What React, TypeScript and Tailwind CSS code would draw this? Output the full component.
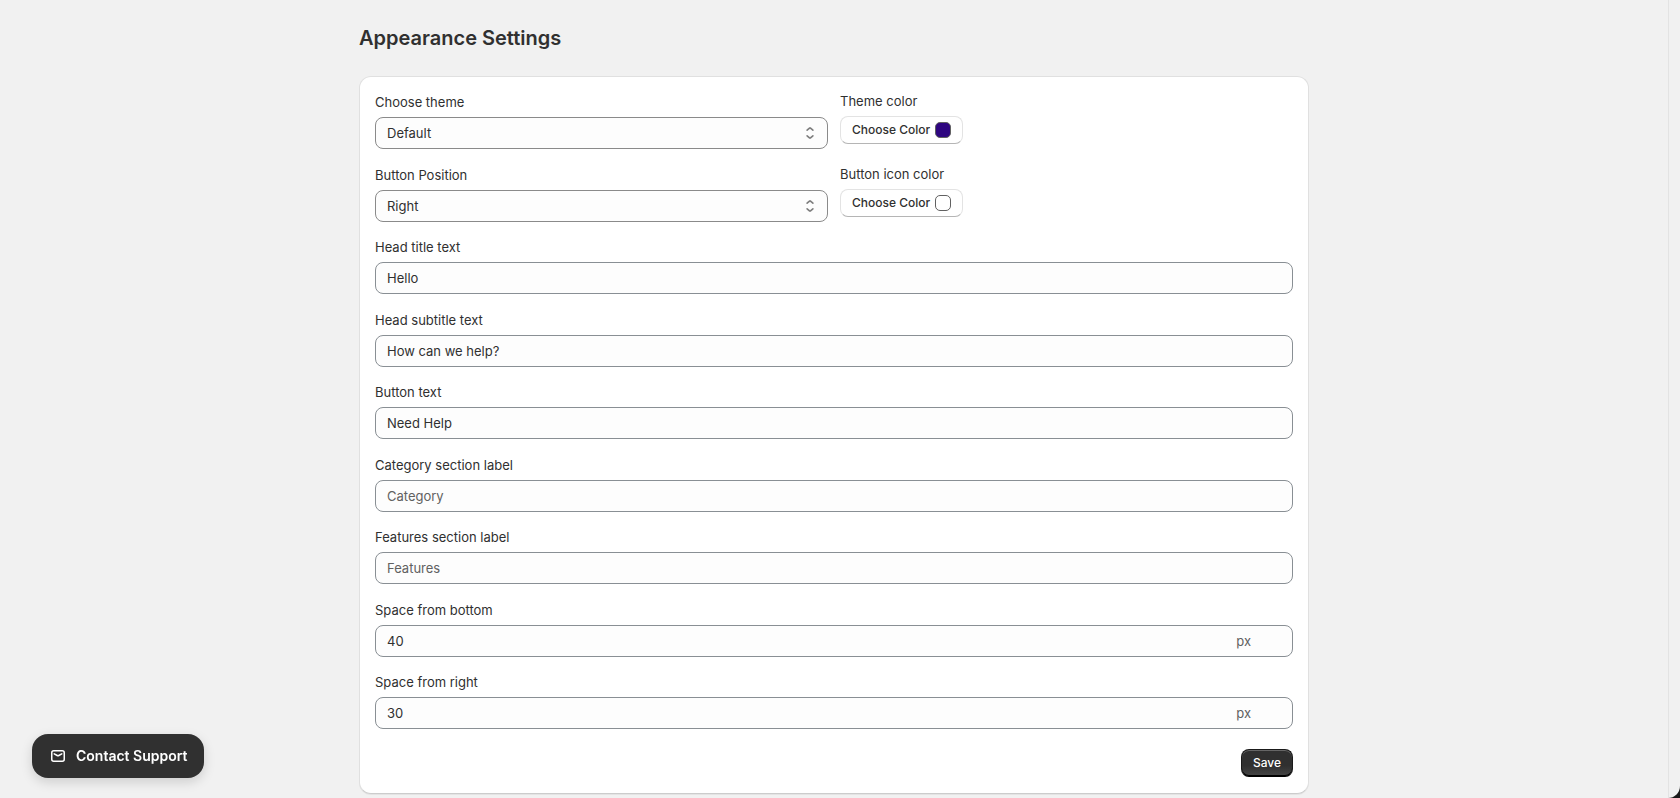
import { useId, useState } from "react";
import type { ReactNode } from "react";

const controlClass =
  "h-8 w-full rounded-lg border bg-[#fdfdfd] px-[11px] text-[13px] leading-5 text-[#303030] placeholder:text-[#616161]";

function Field({ id, label, children }: { id: string; label: string; children: ReactNode }) {
  return (
    <div className="flex flex-col gap-1">
      <label htmlFor={id} className="text-[13px] leading-[21px]">
        {label}
      </label>
      {children}
    </div>
  );
}

function TextField({
  label,
  value,
  placeholder,
  suffix,
}: {
  label: string;
  value?: string;
  placeholder?: string;
  suffix?: string;
}) {
  const id = useId();
  return (
    <Field id={id} label={label}>
      <div className="relative">
        <input
          id={id}
          className={`${controlClass} border-[#898f94]`}
          defaultValue={value}
          placeholder={placeholder}
        />
        {suffix && (
          <span className="pointer-events-none absolute inset-y-0 right-[42px] flex items-center text-[13px] leading-5 text-[#616161]">
            {suffix}
          </span>
        )}
      </div>
    </Field>
  );
}

function SelectField({ label, options }: { label: string; options: string[] }) {
  const id = useId();
  return (
    <Field id={id} label={label}>
      <div className="relative">
        <select id={id} className={`${controlClass} appearance-none border-[#8a8a8a]`}>
          {options.map((option) => (
            <option key={option}>{option}</option>
          ))}
        </select>
        <svg
          viewBox="0 0 20 20"
          className="pointer-events-none absolute top-1.5 right-2 size-5"
          fill="none"
          stroke="#7e7e7e"
          strokeWidth="1.6"
          strokeLinecap="round"
          strokeLinejoin="round"
        >
          <path d="M7.1 7.2 9.5 5.1a.8.8 0 0 1 1 0L12.9 7.2" />
          <path d="M7.1 12.8l2.4 2.1a.8.8 0 0 0 1 0L12.9 12.8" />
        </svg>
      </div>
    </Field>
  );
}

function ColorField({ label, swatch }: { label: string; swatch: string }) {
  const id = useId();
  return (
    <div className="flex flex-col items-start gap-[5px]">
      <label htmlFor={id} className="text-[13px] leading-[19px]">
        {label}
      </label>
      <button
        id={id}
        type="button"
        className="flex h-7 items-center gap-[5px] rounded-lg border border-[#e3e3e3] border-b-[#b5b5b5] bg-white px-[11px] text-xs leading-4 font-[550]"
      >
        Choose Color
        <span className={`size-4 rounded-[5px] border border-[#616161] ${swatch}`} />
      </button>
    </div>
  );
}

function ContactSupport() {
  const [open, setOpen] = useState(false);
  return (
    <button
      type="button"
      aria-expanded={open}
      onClick={() => setOpen(!open)}
      className="fixed bottom-5 left-8 flex h-11 items-center gap-2 rounded-2xl bg-[#303030] px-4 text-sm font-semibold text-white shadow-[0_4px_12px_rgba(0,0,0,0.15)]"
    >
      <svg
        viewBox="0 0 20 20"
        className="size-5"
        fill="none"
        stroke="currentColor"
        strokeWidth="1.5"
        strokeLinecap="round"
      >
        <rect x="3.75" y="4.75" width="12.5" height="10.5" rx="2" />
        <path d="M6.2 7.8 9.2 9.5a1.6 1.6 0 0 0 1.6 0L13.8 7.8" />
      </svg>
      Contact Support
    </button>
  );
}

export default function App() {
  return (
    <div className="flex min-h-screen bg-[#1a1a1a] font-['Inter',sans-serif] text-[#303030]">
      <div className="flex flex-1 rounded-br-xl bg-[#f1f1f1]">
        <main className="mx-auto flex w-full max-w-[998px] flex-col px-6 pb-1">
          <h1 className="pt-6 pb-6 text-xl leading-7 font-semibold">Appearance Settings</h1>
          <form
            className="flex flex-1 flex-col gap-5 rounded-xl border border-[#e0e0e0] border-b-[#cccccc] bg-white p-[15px] pb-4 shadow-[0_1px_0_rgba(0,0,0,0.05)]"
            onSubmit={(event) => event.preventDefault()}
          >
            <div className="flex flex-1 flex-col justify-between gap-3">
              <div className="grid grid-cols-2 gap-3">
                <SelectField label="Choose theme" options={["Default"]} />
                <ColorField label="Theme color" swatch="bg-[#2e0680]" />
              </div>
              <div className="grid grid-cols-2 gap-3">
                <SelectField label="Button Position" options={["Right", "Left"]} />
                <ColorField label="Button icon color" swatch="bg-white" />
              </div>
              <TextField label="Head title text" value="Hello" />
              <TextField label="Head subtitle text" value="How can we help?" />
              <TextField label="Button text" value="Need Help" />
              <TextField label="Category section label" placeholder="Category" />
              <TextField label="Features section label" placeholder="Features" />
              <TextField label="Space from bottom" value="40" suffix="px" />
              <TextField label="Space from right" value="30" suffix="px" />
            </div>
            <button
              type="submit"
              className="h-7 self-end rounded-lg border border-[#1a1a1a] border-b-black bg-linear-to-b from-[#303030] from-60% to-[#454545] px-[11px] text-xs leading-4 font-[550] text-white shadow-[inset_0_1px_0_#666666,inset_0_-1px_0_#000000]"
            >
              Save
            </button>
          </form>
        </main>
        <div className="w-3 rounded-br-xl border-l border-[#e3e3e3]" />
      </div>
      <ContactSupport />
    </div>
  );
}
